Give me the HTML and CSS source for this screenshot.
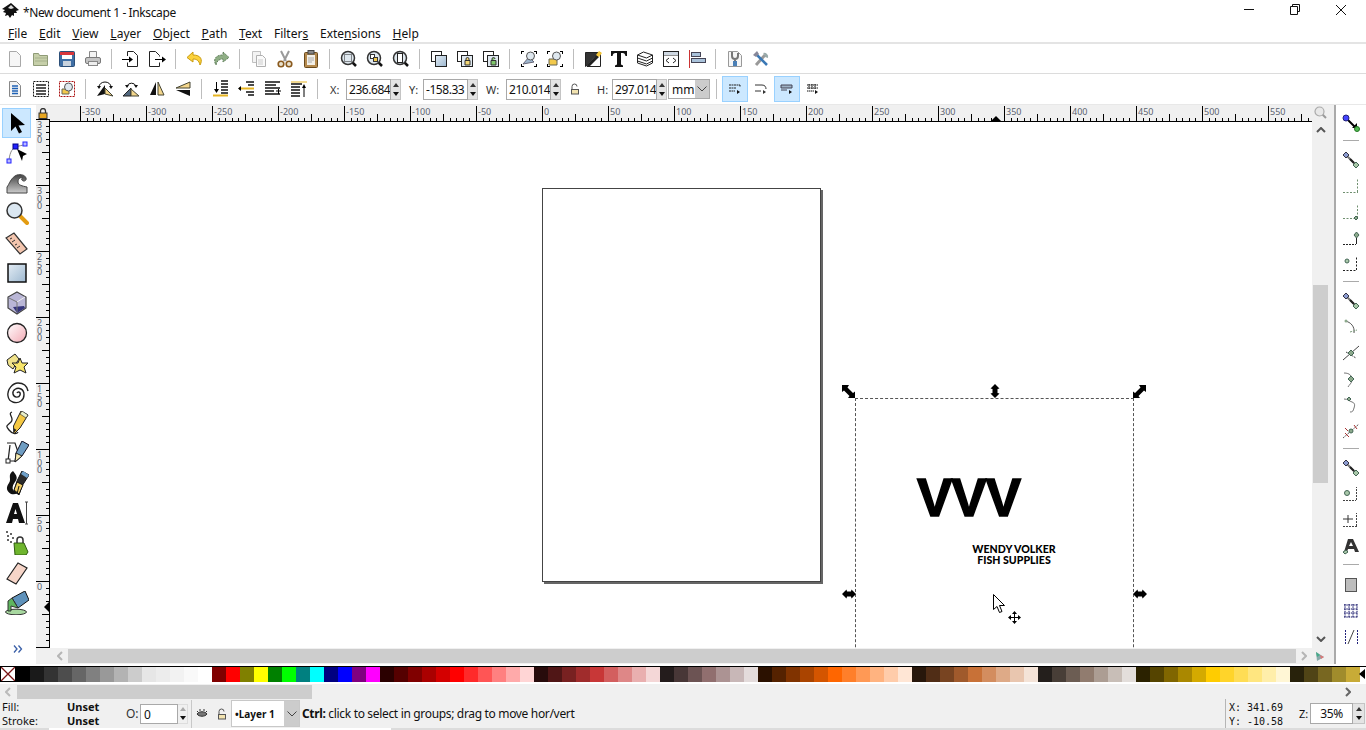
FILE: index.html
```html
<!DOCTYPE html>
<html lang="en">
<head>
    <meta charset="UTF-8">
    <title>*New document 1 - Inkscape</title>
    <link rel="stylesheet" href="styles.css">
</head>
<body>

<!-- shared snap icon pieces + gradients -->
<svg class="defs" aria-hidden="true">
    <defs>
        <linearGradient id="glass" x1="0" y1="0" x2="1" y2="1"><stop offset="0" stop-color="#e4edf5"/><stop offset="1" stop-color="#9db8d0"/></linearGradient>
        <linearGradient id="pink" x1="0" y1="0" x2="1" y2="1"><stop offset="0" stop-color="#fff"/><stop offset="1" stop-color="#f3a9b4"/></linearGradient>
        <linearGradient id="wave" x1="0" y1="0" x2="0" y2="1"><stop offset="0" stop-color="#444"/><stop offset="1" stop-color="#ccc"/></linearGradient>
        <symbol id="s-nodes" viewBox="0 0 18 18"><path d="M4 4l10 10" stroke="#777" stroke-width="2"/><path d="M8 8l4 4" stroke="#222" stroke-width="2"/><path d="M4 1l3 3-3 3-3-3z" fill="#8b9bd0" stroke="#334"/><path d="M14 11l3 3-3 3-3-3z" fill="#a9c8a9" stroke="#465"/></symbol>
        <symbol id="s-corner" viewBox="0 0 18 18"><path d="M1 15.500h15M15.500 15V1" stroke="#6f8f6f" stroke-dasharray="2 1.500" fill="none"/></symbol>
    </defs>
</svg>

<div class="titlebar">
    <svg class="app-icon" width="18" height="16" viewBox="0 0 18 16"><path d="M9 0l8 7-3 1 1 2-3 0 0 3-2-1-2 3-2-3-3 1 1-3-3-1 2-2-3-1z" fill="#111"/><path d="M9 2l3 3-3 1-3-1z" fill="#ddd"/></svg>
    <span class="title-text">*New document 1 - Inkscape</span>
    <div class="win-controls">
        <svg width="12" height="12" viewBox="0 0 12 12"><path d="M1 5.500h10" stroke="#111"/></svg>
        <svg width="12" height="12" viewBox="0 0 12 12"><path d="M3.500 2.500v-2h7v7h-2M1.500 2.500h7v8h-7z" stroke="#111" fill="none"/></svg>
        <svg width="12" height="12" viewBox="0 0 12 12"><path d="M1 1l10 10M11 1l-10 10" stroke="#111"/></svg>
    </div>
</div>

<div class="menubar">
    <span><u>F</u>ile</span><span><u>E</u>dit</span><span><u>V</u>iew</span><span><u>L</u>ayer</span><span><u>O</u>bject</span><span><u>P</u>ath</span><span><u>T</u>ext</span><span>Filter<u>s</u></span><span>Exte<u>n</u>sions</span><span><u>H</u>elp</span>
</div>

<div class="toolbar tb-commands">
    <i class="btn"><svg viewBox="0 0 18 18"><path d="M3.500 1.500h7l4 4v11h-11z" fill="#f6f6f6" stroke="#a8a8a8"/></svg></i>
    <i class="btn"><svg viewBox="0 0 18 18"><path d="M1.500 15.500v-12h5l1 2h8v10z" fill="#c6cfa9" stroke="#8f9b77"/><path d="M3 8h12M3 11h12" stroke="#a6b18c"/></svg></i>
    <i class="btn"><svg viewBox="0 0 18 18"><rect x="1.500" y="1.500" width="15" height="15" rx="1" fill="#3f6fa5" stroke="#2c4f78"/><rect x="2" y="2" width="14" height="3" fill="#d8363c"/><rect x="4" y="5" width="10" height="4" fill="#fff"/><rect x="5" y="11" width="8" height="5" fill="#c9d3de"/></svg></i>
    <i class="btn"><svg viewBox="0 0 18 18"><path d="M5.500 7.500v-6h7v6" fill="#f4f4f4" stroke="#888"/><rect x="1.500" y="7.500" width="15" height="6" rx="1.500" fill="#c4c4c4" stroke="#7a7a7a"/><rect x="4.500" y="11.500" width="9" height="4" fill="#eee" stroke="#888"/></svg></i>
    <b class="sep"></b>
    <i class="btn"><svg viewBox="0 0 18 18"><path d="M5.500 6v-4.500h6l4 4v11h-10v-4" fill="#fff" stroke="#222"/><path d="M0 9.500h8" stroke="#000"/><path d="M7 6.500l4 3-4 3z" fill="#000"/></svg></i>
    <i class="btn"><svg viewBox="0 0 18 18"><path d="M11.500 6.500v-1l-4-4h-6v15h10v-4" fill="#fff" stroke="#222"/><path d="M7 9.500h8" stroke="#000"/><path d="M14 6.500l4 3-4 3z" fill="#000"/></svg></i>
    <b class="sep"></b>
    <i class="btn"><svg viewBox="0 0 18 18"><path d="M7 2L1 7.500 7 12V9c3 0 6 1 7 6 3-5 1-10-7-10z" fill="#fcd23c" stroke="#c99b10"/></svg></i>
    <i class="btn"><svg viewBox="0 0 18 18"><path d="M11 2l6 5.500L11 12V9c-3 0-6 1-7 6-3-5-1-10 7-10z" fill="#8fae85" stroke="#5f7f5a" stroke-dasharray="2 1"/></svg></i>
    <b class="sep"></b>
    <i class="btn"><svg viewBox="0 0 18 18"><path d="M2.500 1.500h8v11h-8z" fill="#f3f3f3" stroke="#c0c0c0"/><path d="M6.500 5.500h6l3 3v8h-9z" fill="#fafafa" stroke="#b0b0b0"/><path d="M8 10h5M8 12h5M8 14h5" stroke="#ccc"/></svg></i>
    <i class="btn"><svg viewBox="0 0 18 18"><path d="M5 1l5 10M13 1L8 11" stroke="#9a9a9a" stroke-width="2"/><circle cx="5" cy="14" r="2.800" fill="#e9e2cf" stroke="#8a5a1e" stroke-width="1.600"/><circle cx="13" cy="14" r="2.800" fill="#e9e2cf" stroke="#8a5a1e" stroke-width="1.600"/></svg></i>
    <i class="btn"><svg viewBox="0 0 18 18"><rect x="2.500" y="2.500" width="13" height="15" rx="1" fill="#b58a4e" stroke="#6a4a1c"/><path d="M5 5h8v10H5z" fill="#f3f0e8"/><path d="M6 8h6M6 10h6M6 12h4" stroke="#aaa"/><rect x="6" y="0.500" width="6" height="3.500" fill="#888" stroke="#444"/></svg></i>
    <b class="sep"></b>
    <i class="btn"><svg viewBox="0 0 18 18"><path d="M12 12l4 4" stroke="#111" stroke-width="2.500"/><circle cx="8" cy="8" r="6.500" fill="#dfe8ef" stroke="#333" stroke-width="1.500"/><rect x="4.500" y="4.500" width="7" height="7" fill="none" stroke="#222" stroke-dasharray="1 1"/></svg></i>
    <i class="btn"><svg viewBox="0 0 18 18"><path d="M12 12l4 4" stroke="#111" stroke-width="2.500"/><circle cx="8" cy="8" r="6.500" fill="#dfe8ef" stroke="#333" stroke-width="1.500"/><rect x="4.500" y="4.500" width="4" height="4" fill="#fff" stroke="#333"/><rect x="7.500" y="7.500" width="4" height="4" fill="#f2c94c" stroke="#333"/></svg></i>
    <i class="btn"><svg viewBox="0 0 18 18"><path d="M12 12l4 4" stroke="#111" stroke-width="2.500"/><circle cx="8" cy="8" r="6.500" fill="#dfe8ef" stroke="#333" stroke-width="1.500"/><rect x="5.500" y="3.500" width="5" height="9" fill="#fff" stroke="#222"/></svg></i>
    <b class="sep"></b>
    <i class="btn"><svg viewBox="0 0 18 18"><rect x="1.500" y="1.500" width="10" height="10" fill="#fff" stroke="#222"/><rect x="5.500" y="5.500" width="11" height="11" fill="url(#glass)" stroke="#222"/></svg></i>
    <i class="btn"><svg viewBox="0 0 18 18"><rect x="1.500" y="1.500" width="10" height="10" fill="#fff" stroke="#222"/><rect x="5.500" y="5.500" width="11" height="11" fill="#dfe8ef" stroke="#222"/><path d="M9 10.500h5v4.500H9zM10 10.500V9a1.500 1.500 0 013 0v1.500" fill="#f2d675" stroke="#333"/></svg></i>
    <i class="btn"><svg viewBox="0 0 18 18"><rect x="1.500" y="1.500" width="10" height="10" fill="#fff" stroke="#222"/><rect x="5.500" y="5.500" width="11" height="11" fill="#dfe8ef" stroke="#222"/><path d="M9 10.500h5v4.500H9zM10 10.500V9a1.500 1.500 0 013 0" fill="#7fc66b" stroke="#333"/></svg></i>
    <b class="sep"></b>
    <i class="btn"><svg viewBox="0 0 18 18"><path d="M1 1h3v1H2v2H1zM14 1h3v3h-1V2h-2zM1 14h1v2h2v1H1zM14 16h2v-2h1v3h-3z" fill="#000"/><path d="M3 14L9 7l5 5z" fill="#9fb7cf" stroke="#667"/><circle cx="10.500" cy="6" r="4" fill="#dfe8ef" stroke="#555"/></svg></i>
    <i class="btn"><svg viewBox="0 0 18 18"><path d="M1 1h3v1H2v2H1zM14 1h3v3h-1V2h-2zM1 14h1v2h2v1H1zM14 16h2v-2h1v3h-3z" fill="#000"/><path d="M3 9h8v6H3z" fill="#f2c94c" stroke="#665"/><circle cx="10.500" cy="6" r="4" fill="#dfe8ef" stroke="#555"/></svg></i>
    <b class="sep"></b>
    <i class="btn"><svg viewBox="0 0 18 18"><path d="M1.500 16.500V2.500h13L1.500 16.500z" fill="#333" stroke="#222"/><path d="M15 2.500L3 16.500h13.500V2.500z" fill="#fff" stroke="#222"/><path d="M4 14l9-9 2 2-9 9-3 0z" fill="#222"/><path d="M12 5l3-4 3 2-3 4z" fill="#f8c83a"/></svg></i>
    <i class="btn"><svg viewBox="0 0 18 18"><path d="M1 1h16v5h-1.500c-.5-2-1-3-3-3H11v11.500l2 1V17H5v-1.500l2-1V3H5.500c-2 0-2.500 1-3 3H1z" fill="#111"/></svg></i>
    <i class="btn"><svg viewBox="0 0 18 18"><path d="M1.500 5l6-3 9 3-6 3z" fill="#fff" stroke="#222"/><path d="M1.500 8l9 3 6-3M1.500 11l9 3 6-3" fill="none" stroke="#222"/><path d="M1.500 5v8l9 3 6-3V5" fill="none" stroke="#222"/></svg></i>
    <i class="btn"><svg viewBox="0 0 18 18"><rect x="1.500" y="1.500" width="15" height="15" fill="#fff" stroke="#222"/><path d="M2 5h14" stroke="#222"/><path d="M2 2h14v3H2z" fill="#cfd8e2"/><path d="M7 8l-3 2.500L7 13M11 8l3 2.500L11 13" fill="none" stroke="#222"/></svg></i>
    <i class="btn"><svg viewBox="0 0 18 18"><path d="M1.500 0v18" stroke="#c33"/><rect x="3.500" y="2.500" width="9" height="4" fill="#a9c2da" stroke="#445"/><rect x="3.500" y="8.500" width="14" height="4" fill="#a9c2da" stroke="#445"/></svg></i>
    <b class="sep"></b>
    <i class="btn"><svg viewBox="0 0 18 18"><path d="M2.500 1.500h9l4 4v11h-13z" fill="#f6f6f6" stroke="#999"/><path d="M6 2v4a3 3 0 006 0V3M9 9v7" fill="none" stroke="#777" stroke-width="2"/><path d="M7 11h4v5H7z" fill="#4a7fb5"/></svg></i>
    <i class="btn"><svg viewBox="0 0 18 18"><path d="M4 15L13 5" stroke="#999" stroke-width="3"/><path d="M11 3a4 4 0 015 5l-3-1-1-3z" fill="#9aa"/><path d="M4 4l11 11" stroke="#3a78b5" stroke-width="2.500"/><path d="M1 5l4-4 2 3-3 3z" fill="#889"/></svg></i>
</div>

<div class="toolbar tb-controls">
    <i class="btn"><svg viewBox="0 0 18 18"><path d="M3.500 1.500h7l4 4v11h-11z" fill="#f4f4f4" stroke="#888"/><path d="M6 6h6M6 8.500h6M6 11h6M6 13.500h6" stroke="#1f62b5" stroke-width="1.300"/></svg></i>
    <i class="btn"><svg viewBox="0 0 18 18"><rect x="1.500" y="1.500" width="15" height="15" fill="#fff" stroke="#111" stroke-dasharray="2 1"/><path d="M4 5h10M4 8h10M4 11h10M4 14h10" stroke="#555" stroke-width="2"/></svg></i>
    <i class="btn"><svg viewBox="0 0 18 18"><rect x="1.500" y="1.500" width="15" height="15" fill="#fff" stroke="#a11" stroke-dasharray="2 1"/><path d="M4 9h7v5H4z" fill="#f2c94c" stroke="#665"/><circle cx="10.500" cy="7" r="4" fill="#dfe8ef" stroke="#555"/></svg></i>
    <b class="sep"></b>
    <i class="btn"><svg viewBox="0 0 18 18"><path d="M1 16l8-2V5z" fill="#111"/><path d="M9 14l8 2-8-8z" fill="#f3d68c" stroke="#443"/><path d="M3 7a6 5 0 0112 0" fill="none" stroke="#111"/><path d="M1 6h4L3 9zM13 6h4l-2 3z" fill="#111"/></svg></i>
    <i class="btn"><svg viewBox="0 0 18 18"><path d="M1 16h8V8z" fill="#53697f" stroke="#222"/><path d="M9 16h8l-8-7z" fill="#f3d68c" stroke="#443"/><path d="M5 6a5 5 0 019 0" fill="none" stroke="#111"/><path d="M3 5h4L5 8zM12 5h4l-2 3z" fill="#111"/></svg></i>
    <i class="btn"><svg viewBox="0 0 18 18"><path d="M2 15L8 2v13z" fill="#111"/><path d="M10 15V2l6 13z" fill="#f3d68c" stroke="#443"/></svg></i>
    <i class="btn"><svg viewBox="0 0 18 18"><path d="M16 2L2 8h14z" fill="#f3d68c" stroke="#443"/><path d="M16 16L2 10h14z" fill="#111"/></svg></i>
    <b class="sep"></b>
    <i class="btn"><svg viewBox="0 0 18 18"><path d="M9 1h7M9 4h7M9 7h7M9 10h7M9 13h7" stroke="#111" stroke-width="1.500"/><path d="M4.500 2v9" stroke="#000"/><path d="M2 9h5l-2.500 4z" fill="#000"/><path d="M1 15.500h15" stroke="#e6b422" stroke-width="2"/></svg></i>
    <i class="btn"><svg viewBox="0 0 18 18"><path d="M8 2h8M10 5h6M8 12h8M10 15h6" stroke="#111" stroke-width="1.500"/><path d="M1 8.500h15" stroke="#e6b422" stroke-width="2"/><path d="M3 6l-3 2.500 3 2.500zM7 5h-3" fill="#000"/></svg></i>
    <i class="btn"><svg viewBox="0 0 18 18"><path d="M1 2h15M1 5h11M1 8h15M1 11h9M1 14h15" stroke="#111" stroke-width="1.500"/><path d="M12 11h5M14.500 9v5" stroke="#000"/></svg></i>
    <i class="btn"><svg viewBox="0 0 18 18"><path d="M1 2h16" stroke="#e6b422" stroke-width="1"/><path d="M1 4h11M1 7h9M1 10h9M1 13h9M1 16h9" stroke="#111" stroke-width="1.500"/><path d="M14 6v11" stroke="#000"/><path d="M12 8l2-4 2 4z" fill="#000"/></svg></i>
    <b class="sep"></b>
    <label class="field fx">X:</label><span class="spin sx"><span class="spin-val">236.684</span><span class="spin-btns"><em class="up"></em><em class="down"></em></span></span>
    <label class="field fy">Y:</label><span class="spin sy"><span class="spin-val">-158.33</span><span class="spin-btns"><em class="up"></em><em class="down"></em></span></span>
    <label class="field fw">W:</label><span class="spin"><span class="spin-val">210.014</span><span class="spin-btns"><em class="up"></em><em class="down"></em></span></span>
    <svg class="small-lock" width="10" height="12" viewBox="0 0 10 12"><path d="M2 6V3.500a2.500 2.500 0 015 0" fill="none" stroke="#555"/><rect x="1.500" y="6.500" width="7" height="4.500" fill="#f2e3b0" stroke="#555"/></svg>
    <label class="field fh">H:</label><span class="spin"><span class="spin-val">297.014</span><span class="spin-btns"><em class="up"></em><em class="down"></em></span></span>
    <span class="unit"><span>mm</span><em class="combo-arrow"><svg width="10" height="6" viewBox="0 0 10 6"><path d="M.5.500l4.500 4.500 4.500-4.500" fill="none" stroke="#444"/></svg></em></span>
    <b class="sep sep-units"></b>
    <i class="btn toggle on"><svg viewBox="0 0 14 12"><path d="M1 2h11v2M1 5h7M1 8h6" stroke="#222" fill="none" stroke-dasharray="2 .500"/><path d="M9 7l3 2-3 2z" fill="#111"/></svg></i>
    <i class="btn toggle"><svg viewBox="0 0 14 12"><path d="M1 2h7c3 0 4 2 4 4M1 8h6" stroke="#333" fill="none"/><path d="M9 7l3 2-3 2z" fill="#333"/></svg></i>
    <i class="btn toggle on"><svg viewBox="0 0 14 12"><path d="M1 2h11v3H1zM1 7h6" stroke="#445" fill="#9db2c6"/><path d="M9 7l3 2-3 2z" fill="#111"/></svg></i>
    <i class="btn toggle"><svg viewBox="0 0 14 12"><path d="M1 2h11M1 5h11M3 1v5M6 1v5M9 1v5M1 8h7" stroke="#111" fill="none" stroke-dasharray="1.500 .500"/><path d="M9 7l3 2-3 2z" fill="#111"/></svg></i>
</div>

<div class="main">
    <div class="toolbox">
        <i class="tool active"><svg viewBox="0 0 24 24"><path d="M6 2l0 18 4.500-4.500 3.500 7 3-1.500-3.500-6.500 6.500-.5z" fill="#000"/></svg></i>
        <i class="tool"><svg viewBox="0 0 24 24"><path d="M4 19C5 10 8 7 11 6c3-1 6-2 9-2" fill="none" stroke="#888"/><rect x="8" y="3" width="5" height="5" fill="#22f" stroke="#008"/><rect x="18" y="1" width="4" height="4" fill="#bbf" stroke="#22f"/><rect x="2" y="18" width="4" height="4" fill="#bbf" stroke="#22f"/><path d="M12 8l10 5-4 2-1 5z" fill="#000"/></svg></i>
        <i class="tool"><svg viewBox="0 0 24 24"><path d="M2 22V16C4 14 6 6 12 4c4-1 8 0 9 3 1 3-3 4-4 2-1-1 0-2 1-2-2-1-5 0-5 4 0 3 4 4 9 5v6z" fill="url(#wave)" stroke="#444"/></svg></i>
        <i class="tool"><svg viewBox="0 0 24 24"><path d="M15 15l7 7" stroke="#e39c12" stroke-width="4" stroke-linecap="round"/><circle cx="9.500" cy="9.500" r="7.500" fill="#dbe7f1" stroke="#333" stroke-width="1.500"/></svg></i>
        <i class="tool"><svg viewBox="0 0 24 24"><path d="M1 7l8-5 13 16-7 5z" fill="#f3c5ae" stroke="#333" stroke-width="1.200"/><path d="M5 8l2-1M7 11l3-2M10 14l2-1M12 17l3-2" stroke="#333"/></svg></i>
        <i class="tool"><svg viewBox="0 0 24 24"><rect x="3" y="3" width="18" height="18" fill="url(#glass)" stroke="#111" stroke-width="1.500"/></svg></i>
        <i class="tool"><svg viewBox="0 0 24 24"><path d="M12 1l9 5v11l-9 6-9-6V6z" fill="#b9b6d6" stroke="#444" stroke-width="1.200"/><path d="M8 16l11-1 1 2-8 5z" fill="#34347a"/><path d="M12 11l8-5" stroke="#eee"/><path d="M4 7l8 4v10" fill="none" stroke="#777"/></svg></i>
        <i class="tool"><svg viewBox="0 0 24 24"><circle cx="12" cy="12" r="9.500" fill="url(#pink)" stroke="#222" stroke-width="1.300"/></svg></i>
        <i class="tool"><svg viewBox="0 0 24 24"><path d="M2 9l8-6 4 5-2 3-4 7-5-4z" fill="#f0e28a" stroke="#222"/><path d="M15 7l2 5 6 0-4 4 2 6-6-3-6 3 2-6-4-4 6 0z" fill="#f7e56b" stroke="#222"/></svg></i>
        <i class="tool"><svg viewBox="0 0 24 24"><path d="M12 12c1-2 4-1 3 2s-6 3-7-1 4-7 8-5 4 9 0 12-12 2-13-5S8 2 13 2s9 3 10 8" fill="none" stroke="#222" stroke-width="1.400"/></svg></i>
        <i class="tool"><svg viewBox="0 0 24 24"><path d="M7 1C2 3 10 7 6 11S0 14 4 19s8 4 9 2" fill="none" stroke="#222" stroke-width="1.300"/><path d="M16 0l7 4-8 13-6 6-.5-8z" fill="#f5c842" stroke="#222"/><path d="M17 0l6 4-2 3-6-4z" fill="#e9efc9" stroke="#222" stroke-width=".6"/><path d="M8.500 17l3 2-3 3z" fill="#222"/></svg></i>
        <i class="tool"><svg viewBox="0 0 24 24"><path d="M2 2h8l3 9" fill="none" stroke="#222" stroke-width="1.200"/><path d="M3 20L5 4" fill="none" stroke="#222" stroke-width="1.200"/><rect x="1" y="18" width="4" height="4" fill="#fff" stroke="#222"/><path d="M5 20h5" stroke="#222"/><path d="M17 0l7 4-7 11-7 6 1-9z" fill="#6f9dc2" stroke="#112"/><path d="M11 12l6 3-7 6z" fill="#f4e9b0" stroke="#222"/></svg></i>
        <i class="tool"><svg viewBox="0 0 24 24"><path d="M8 0C2 4 7 8 4 12s-3 8 2 11c5 1 7-1 6-2C6 20 7 15 10 11S12 5 8 0z" fill="#111"/><path d="M17 0l7 4-7 11-3 9-5-4 3-10z" fill="#2b2b2b" stroke="#111"/><path d="M18 0l6 4-2 3-6-4z" fill="#6fa0c9"/><path d="M12 11l6 3-4 9-5-4z" fill="#f2cf67" stroke="#111"/><path d="M12 23l2-8" stroke="#111"/></svg></i>
        <i class="tool"><svg viewBox="0 0 24 24"><path d="M8 2h5l7 20h-6l-1-4H8l-1 4H1zM9 13h3l-1.500-5z" fill="#111"/><path d="M20 1h3M21.500 1v22M20 23h3" stroke="#444" fill="none"/></svg></i>
        <i class="tool"><svg viewBox="0 0 24 24"><path d="M9 12h10l4 9-2 3H10z" fill="#6fb52e" stroke="#2f5c10"/><path d="M12 12V9a3 3 0 016 0v3" fill="none" stroke="#333" stroke-width="1.500"/><path d="M2 5h2M5 3h2M7 7h2M2 9h2M5 11h2M1 1h2" stroke="#333" stroke-width="1.500"/></svg></i>
        <i class="tool"><svg viewBox="0 0 24 24"><path d="M2 18L13 2l9 5-11 16z" fill="#f6d5c8" stroke="#222" stroke-width="1.200"/></svg></i>
        <i class="tool"><svg viewBox="0 0 24 24"><ellipse cx="11" cy="21" rx="10.500" ry="2.800" fill="#a8d8a0" stroke="#333"/><path d="M7 7l13-7 4 9-11 8z" fill="#5f92bb" stroke="#111"/><path d="M7 7l-4 3v10h3v-5l7 2z" fill="#5fb55f" stroke="#333"/></svg></i>
        <svg class="tool-more" width="10" height="8" viewBox="0 0 10 8"><path d="M1 .500l3 3.500-3 3.500M5.500 .500l3 3.500-3 3.500" fill="none" stroke="#3a5fa8" stroke-width="1.300"/></svg>
    </div>

    <div class="workspace">
        <div class="ruler-lock"><svg width="10" height="11" viewBox="0 0 10 11"><path d="M2.500 5V3a2.500 2.500 0 015 0v2" fill="none" stroke="#333" stroke-width="1.300"/><rect x="1" y="5" width="8" height="5.500" fill="#e6a520" stroke="#333"/></svg></div>
        <div class="ruler-h">
            <span>-350</span><span>-300</span><span>-250</span><span>-200</span><span>-150</span><span>-100</span><span>-50</span><span>0</span><span>50</span><span>100</span><span>150</span><span>200</span><span>250</span><span>300</span><span>350</span><span>400</span><span>450</span><span>500</span><span>550</span>
            <em class="ruler-mark-h"></em>
        </div>
        <div class="corner-zoom"><svg width="13" height="13" viewBox="0 0 13 13"><path d="M8 8l4 4" stroke="#999" stroke-width="2"/><circle cx="5.500" cy="5.500" r="4.500" fill="#e8e8e8" stroke="#aaa" stroke-width="1.200"/></svg></div>

        <div class="ruler-v">
            <span>350</span><span>300</span><span>250</span><span>200</span><span>150</span><span>100</span><span>50</span><span>0</span>
            <em class="ruler-mark-v"></em>
        </div>

        <div class="canvas">
            <div class="page"></div>
            <div class="selection"></div>
            <div class="logo-mark">VVV</div>
            <div class="logo-name">WENDY VOLKER<br>FISH SUPPLIES</div>

            <svg class="handle h-nw" width="13" height="13" viewBox="0 0 13 13"><path d="M0 0h7L5.500 2.500 11 8l2-1.500V13H6l1.500-2L2 5.500 0 7z" fill="#000"/></svg>
            <svg class="handle h-n" width="10" height="14" viewBox="0 0 10 14"><path d="M5 0l4.500 4.500L7.500 5v4l2 .5L5 14 .5 9.500l2-.5V5L.5 4.500z" fill="#000"/></svg>
            <svg class="handle h-ne" width="13" height="13" viewBox="0 0 13 13"><path d="M13 0H6l1.500 2.500L2 8 0 6.500V13h7l-1.500-2L11 5.500 13 7z" fill="#000"/></svg>
            <svg class="handle h-w" width="14" height="10" viewBox="0 0 14 10"><path d="M0 5L4.500.500 5 2.500h4l.5-2L14 5 9.500 9.500 9 7.500H5l-.5 2z" fill="#000"/></svg>
            <svg class="handle h-e" width="14" height="10" viewBox="0 0 14 10"><path d="M0 5L4.500.500 5 2.500h4l.5-2L14 5 9.500 9.500 9 7.500H5l-.5 2z" fill="#000"/></svg>

            <svg class="pointer" width="13" height="20" viewBox="0 0 13 20"><path d="M.5.500v15l3.500-3 2.500 6 2.500-1-2.500-6h5z" fill="#fff" stroke="#000"/></svg>
            <svg class="move-cur" width="13" height="13" viewBox="0 0 13 13"><path d="M6.500 0l2.500 3H7v3h3V4l3 2.500L10 9V7H7v3h2l-2.500 3L4 10h2V7H3v2L0 6.500 3 4v2h3V3H4z" fill="#000"/></svg>
        </div>

        <div class="scroll-v">
            <svg class="arrow-up" width="10" height="6" viewBox="0 0 10 6"><path d="M1 5l4-4 4 4" fill="none" stroke="#555" stroke-width="2"/></svg>
            <div class="thumb-v"></div>
            <svg class="arrow-down" width="10" height="6" viewBox="0 0 10 6"><path d="M1 1l4 4 4-4" fill="none" stroke="#555" stroke-width="2"/></svg>
        </div>

        <div class="scroll-h">
            <svg width="6" height="10" viewBox="0 0 6 10"><path d="M5 1L1 5l4 4" fill="none" stroke="#b5b5b5" stroke-width="2"/></svg>
            <div class="thumb-h"></div>
            <svg width="6" height="10" viewBox="0 0 6 10"><path d="M1 1l4 4-4 4" fill="none" stroke="#b5b5b5" stroke-width="2"/></svg>
        </div>
        <div class="corner-color"><svg width="10" height="11" viewBox="0 0 10 11"><path d="M1 1l8 5-7 4z" fill="#8aa"/><path d="M1 1l4 3-3 2z" fill="#4a8"/><path d="M5 4l4 2-3 2z" fill="#d77"/></svg></div>
    </div>

    <div class="snapbar">
        <i class="snap"><svg viewBox="0 0 18 18"><path d="M4 4l9 9" stroke="#000" stroke-width="2"/><path d="M10 14l5 0 0-5z" fill="#000"/><circle cx="4" cy="4" r="3" fill="#44f" stroke="#227"/><circle cx="15" cy="15" r="2.500" fill="#5b5" stroke="#272"/></svg></i>
        <b class="snap-sep"></b>
        <i class="snap s0"><svg><use href="#s-nodes"/></svg></i>
        <i class="snap s1"><svg><use href="#s-corner"/></svg></i>
        <i class="snap s2"><svg><use href="#s-corner"/><path d="M16 15l-2-2-2 2 2 2z" fill="#8ca98c" stroke="#465"/></svg></i>
        <i class="snap s3"><svg><path d="M1 15.500h13" stroke="#222" stroke-dasharray="2 1"/><path d="M14.500 15V9" stroke="#222"/><path d="M14.500 3l-2.500 3 2.500 3 2.500-3z" fill="#8ca98c" stroke="#465"/></svg></i>
        <i class="snap s4"><svg><path d="M1 15.500h13M14.500 15V2" stroke="#222" stroke-dasharray="2 1.500"/><circle cx="5" cy="6" r="2" fill="#a9c8a9" stroke="#465"/></svg></i>
        <b class="snap-sep"></b>
        <i class="snap s5"><svg><use href="#s-nodes"/></svg></i>
        <i class="snap s6"><svg><path d="M3 3c6 1 10 6 9 12" fill="none" stroke="#555"/><path d="M8 14l7-2" stroke="#7a9a7a" stroke-dasharray="2 1"/><circle cx="4" cy="3" r="1.500" fill="#8ca98c"/></svg></i>
        <i class="snap s7"><svg><path d="M1 16L17 2" stroke="#444"/><path d="M4 8l10 6" stroke="#444" stroke-dasharray="2 1"/><path d="M9 6l-3 3 3 3 3-3z" fill="#8ca98c" stroke="#465"/></svg></i>
        <i class="snap s8"><svg><path d="M2 3c6 0 8 3 8 7 0 3-3 5-4 7" fill="none" stroke="#777"/><path d="M9 6l-3 3 3 3 3-3z" fill="#8ca98c" stroke="#465"/></svg></i>
        <i class="snap s9"><svg><path d="M2 3c4 0 5 2 8 3s3 3 2 6-1 4-4 4" fill="none" stroke="#777"/><path d="M7 1l-2 2 2 2 2-2z" fill="#8ca98c" stroke="#465"/></svg></i>
        <i class="snap s10"><svg><path d="M1 16L17 2" stroke="#555" stroke-dasharray="2 1"/><path d="M3 6l3 3M12 3l3 4M3 11l4 4" stroke="#a33"/><circle cx="9" cy="9" r="2" fill="#8ca98c" stroke="#465"/></svg></i>
        <b class="snap-sep"></b>
        <i class="snap s11"><svg><use href="#s-nodes"/></svg></i>
        <i class="snap s12"><svg><path d="M1 15.500h13M14.500 15V2" stroke="#444" stroke-dasharray="2 1"/><circle cx="5" cy="8" r="2.500" fill="#a9c8a9" stroke="#465"/></svg></i>
        <i class="snap s13"><svg><path d="M1 15.500h14M14.500 15V2" stroke="#444" stroke-dasharray="2 1"/><path d="M1 8h10M6 4v8" stroke="#333"/></svg></i>
        <i class="snap s14"><svg><path d="M6 2h5l6 13h-4l-1-3H6l-1 3H2zM7 9h4L9 5z" fill="#333"/><path d="M1 15l3-2 2 2-3 2z" fill="#a9c8a9" stroke="#465"/></svg></i>
        <b class="snap-sep"></b>
        <i class="snap s15"><svg><rect x="3.500" y="2.500" width="11" height="13" fill="#bdbdbd" stroke="#555"/></svg></i>
        <i class="snap s16"><svg><path d="M2 3h14M2 7h14M2 11h14M2 15h14M3 2v14M7 2v14M11 2v14M15 2v14" stroke="#111166" stroke-dasharray="1.500 .800" fill="none"/></svg></i>
        <i class="snap s17"><svg><path d="M3.500 2v14M15.500 2v14" stroke="#22227a" stroke-dasharray="2 1"/><path d="M6 16L12 2" stroke="#444"/></svg></i>
    </div>
</div>

<div class="palette">
    <span class="no-paint"><svg width="14" height="14" viewBox="0 0 14 14"><path d="M0 0l14 14M14 0L0 14" stroke="#7a1515" stroke-width="1.300"/></svg></span>
    <div id="swatches"></div>
    <em class="palette-menu"></em>
</div>

<div class="palette-scroll">
    <svg class="ps-left" width="6" height="10" viewBox="0 0 6 10"><path d="M5 1L1 5l4 4" fill="none" stroke="#bbb" stroke-width="2"/></svg>
    <div class="ps-thumb"></div>
    <svg class="ps-right" width="6" height="10" viewBox="0 0 6 10"><path d="M1 1l4 4-4 4" fill="none" stroke="#666" stroke-width="2"/></svg>
</div>

<div class="statusbar">
    <div class="fs-labels"><span>Fill:</span><span>Stroke:</span></div>
    <div class="fs-values"><span>Unset</span><span>Unset</span></div>
    <label class="opacity-label">O:</label>
    <span class="spin opacity-spin"><span class="spin-val">0</span><span class="spin-btns"><em class="up faint"></em><em class="down"></em></span></span>
    <b class="status-sep"></b>
    <svg class="eye" width="12" height="10" viewBox="0 0 12 10"><path d="M1 5c2-3 8-3 10 0-2 3-8 3-10 0z" fill="#777" stroke="#333"/><path d="M1 2l1 1M4 0v2M8 0v2M11 2l-1 1" stroke="#333"/></svg>
    <svg class="status-lock" width="10" height="12" viewBox="0 0 10 12"><path d="M2 6V3.500a2.500 2.500 0 015 0" fill="none" stroke="#555"/><rect x="1.500" y="6.500" width="7" height="4.500" fill="#f2e3b0" stroke="#555"/></svg>
    <span class="layer-combo"><span class="layer-name">•Layer 1</span><em class="combo-arrow"><svg width="10" height="6" viewBox="0 0 10 6"><path d="M.5.500l4.500 4.500 4.500-4.500" fill="none" stroke="#444"/></svg></em></span>
    <span class="message"><strong>Ctrl:</strong> click to select in groups; drag to move hor/vert</span>
    <div class="coords">
        <div class="coord-grid"><span>X:</span><span>341.69</span><span>Y:</span><span>-10.58</span></div>
        <label class="zoom-label">Z:</label>
        <span class="spin zoom-spin"><span class="spin-val">35%</span><span class="spin-btns"><em class="up"></em><em class="down"></em></span></span>
    </div>
</div>
<div class="bottom-strip"><span></span></div>

<script src="app.js"></script>
</body>
</html>
```

FILE: styles.css
```css
* {
    margin: 0;
    padding: 0;
    box-sizing: border-box;
}

body {
    width: 1366px;
    height: 730px;
    overflow: hidden;
    background: #fff;
    color: #111;
    font-family: "Noto Sans", "Open Sans", sans-serif;
    font-size: 12px;
    display: flex;
    flex-direction: column;
}

i, em, b { font-style: normal; font-weight: normal; }

.defs {
    width: 0;
    height: 0;
    display: block;
    flex: none;
}

/* Title bar */
.titlebar {
    height: 22px;
    flex: none;
    display: flex;
    align-items: center;
    padding-left: 2px;
}

.app-icon { margin-right: 3px; }

.title-text {
    font-size: 12px;
    letter-spacing: -0.38px;
    padding-top: 2px;
}

.win-controls {
    margin-left: auto;
    display: flex;
    gap: 34px;
    padding-right: 19px;
    margin-top: -3px;
}

/* Menu */
.menubar {
    height: 22px;
    flex: none;
    display: flex;
    align-items: center;
    gap: 11.8px;
    padding: 2px 0 0 8px;
    border-bottom: 2px solid #e4e4e4;
}

/* Toolbars */
.toolbar {
    flex: none;
    display: flex;
    align-items: center;
    padding-left: 2px;
    border-bottom: 1px solid #dcdcdc;
}

.tb-commands { height: 30px; }
.tb-controls { height: 31px; border-bottom: 1px solid #e8e8e8; }

.btn {
    width: 26px;
    height: 26px;
    flex: none;
    display: flex;
    align-items: center;
    justify-content: center;
}

.btn svg {
    width: 18px;
    height: 18px;
}

.sep {
    width: 1px;
    height: 20px;
    margin: 0 6px 0 5px;
    background: #bdbdbd;
    flex: none;
}

.field { font-size: 11px; color: #333; flex: none; }
.fx { margin-left: 6px; width: 16px; }
.fy { margin-left: 8px; width: 14px; }
.fw { margin-left: 8px; width: 20px; }
.fh { margin-left: 17px; width: 15px; }

.small-lock { margin-left: 9px; flex: none; }

.spin {
    display: flex;
    height: 21px;
    flex: none;
    align-items: stretch;
}

.spin-val {
    width: 45px;
    border: 1px solid #a9a9a9;
    background: #fff;
    font-size: 12px;
    line-height: 19px;
    padding-left: 2px;
    white-space: nowrap;
    overflow: hidden;
    letter-spacing: -0.45px;
}

.spin-btns {
    width: 10px;
    display: flex;
    flex-direction: column;
    gap: 1px;
    background: #e4e4e4;
    border: 1px solid #c4c4c4;
    border-left: 0;
    align-items: center;
    justify-content: center;
    padding: 2px 0;
}

.spin-btns em {
    width: 0;
    height: 0;
    margin: 2px 0;
    border-left: 3.5px solid transparent;
    border-right: 3.5px solid transparent;
}

.spin-btns .up { border-bottom: 4px solid #333; }
.spin-btns .up.faint { border-bottom-color: #aaa; }
.spin-btns .down { border-top: 4px solid #111; }

.unit {
    display: flex;
    width: 42px;
    height: 20px;
    margin-left: 1px;
    flex: none;
    border: 1px solid #a9a9a9;
    background: #fff;
    font-size: 12px;
    align-items: center;
    padding-left: 3px;
}

.unit span { width: 23px; }

.combo-arrow {
    flex: 1;
    height: 100%;
    background: #ccc;
    display: flex;
    align-items: center;
    justify-content: center;
}

.sep-units { margin: 0 5px 0 6px; }

.toggle {
    height: 26px;
    border: 1px solid transparent;
}

.toggle svg { width: 14px; height: 12px; }

.toggle.on {
    background: #cce8ff;
    border-color: #99d1ff;
}

/* Middle part */
.main {
    height: 559px;
    flex: none;
    display: flex;
}

.toolbox {
    width: 36px;
    flex: none;
    padding: 3px 0 0 2px;
    display: flex;
    flex-direction: column;
}

.tool {
    width: 29px;
    height: 30px;
    flex: none;
    display: flex;
    align-items: center;
    justify-content: center;
    border: 1px solid transparent;
}

.tool svg { width: 24px; height: 24px; }

.tool.active {
    background: #cce8ff;
    border-color: #99d1ff;
}

.tool-more {
    flex: none;
    margin: 27px 0 0 11px;
}

.workspace {
    width: 1298px;
    flex: none;
    display: grid;
    grid-template-columns: 14px 1262px 22px;
    grid-template-rows: 17px 526px 16px;
    background: #f0f0f0;
}

.ruler-lock {
    display: flex;
    justify-content: center;
    padding-top: 3px;
}

/* ruler ticks every 6.6px, mid tick at 33, big one at 66 */
.ruler-h {
    display: flex;
    position: relative;
    overflow: hidden;
    padding-left: 30px;
    border-bottom: 1px solid #000;
    background-color: #f0f0f0;
    background-image:
        repeating-linear-gradient(to right, #000 0 1px, transparent 1px 66px),
        repeating-linear-gradient(to right, #000 0 1px, transparent 1px 33px),
        repeating-linear-gradient(to right, #000 0 1px, transparent 1px 6.6px);
    background-size: 100% 15px, 100% 7px, 100% 3px;
    background-position: 30px bottom, 30px bottom, 30px bottom;
    background-repeat: no-repeat;
}

.ruler-h span {
    width: 66px;
    flex: none;
    padding-left: 2px;
    font-size: 9px;
    line-height: 14px;
    color: #5c6470;
}

.ruler-mark-h {
    position: absolute;
    left: 941px;
    bottom: 0;
    width: 0;
    height: 0;
    border-left: 5px solid transparent;
    border-right: 5px solid transparent;
    border-bottom: 5px solid #000;
}

.corner-zoom {
    display: flex;
    padding: 1px 0 0 2px;
}

.ruler-v {
    grid-column: 1;
    display: flex;
    flex-direction: column;
    position: relative;
    overflow: hidden;
    width: 14px;
    border-right: 1px solid #000;
    margin-top: -3px;
    height: 529px;
    background-color: #f0f0f0;
    background-image:
        repeating-linear-gradient(to bottom, #000 0 1px, transparent 1px 66px),
        repeating-linear-gradient(to bottom, #000 0 1px, transparent 1px 33px),
        repeating-linear-gradient(to bottom, #000 0 1px, transparent 1px 6.6px);
    background-size: 13px 100%, 7px 100%, 3px 100%;
    background-position: right 0, right 0, right 0;
    background-repeat: no-repeat;
}

.ruler-v span {
    height: 66px;
    flex: none;
    width: 7px;
    margin-left: 1px;
    padding-top: 2px;
    font-size: 9px;
    line-height: 7.5px;
    word-break: break-all;
    color: #5c6470;
}

.ruler-mark-v {
    position: absolute;
    right: 0;
    top: 483px;
    width: 0;
    height: 0;
    border-top: 5px solid transparent;
    border-bottom: 5px solid transparent;
    border-right: 5px solid #000;
}

/* Drawing area - everything inside is placed on a free canvas */
.canvas {
    position: relative;
    overflow: hidden;
    background: #fff;
}

.page {
    position: absolute;
    left: 492px;
    top: 66px;
    width: 279px;
    height: 394px;
    background: #fff;
    border: 1px solid #444;
    box-shadow: 2px 2px 0 #666;
}

.selection {
    position: absolute;
    left: 805px;
    top: 276px;
    width: 279px;
    height: 400px;
    border: 1px dashed #555;
}

.logo-mark {
    position: absolute;
    left: 866px;
    top: 346px;
    width: 105px;
    text-align: center;
    font-family: "Liberation Sans", sans-serif;
    font-weight: 700;
    font-size: 53px;
    line-height: 60px;
    letter-spacing: -1px;
    -webkit-text-stroke: 1.5px #000;
    color: #000;
}

.logo-name {
    position: absolute;
    left: 914px;
    top: 422px;
    width: 100px;
    text-align: center;
    font-family: "Lato", sans-serif;
    font-weight: 900;
    font-size: 10.6px;
    line-height: 10.5px;
    color: #000;
    white-space: nowrap;
}

.handle { position: absolute; }
.h-nw { left: 792px; top: 263px; }
.h-n { left: 940px; top: 262px; }
.h-ne { left: 1083px; top: 263px; }
.h-w { left: 792px; top: 467px; }
.h-e { left: 1083px; top: 467px; }

.pointer { position: absolute; left: 943px; top: 472px; }
.move-cur { position: absolute; left: 958px; top: 489px; }

.scroll-v {
    position: relative;
    width: 16px;
    margin-left: 1px;
}

.arrow-up { position: absolute; left: 3px; top: 5px; }
.arrow-down { position: absolute; left: 3px; bottom: 6px; }

.thumb-v {
    position: absolute;
    left: 0;
    top: 163px;
    width: 15px;
    height: 198px;
    background: #cdcdcd;
}

.scroll-h {
    grid-column: 1 / span 2;
    display: flex;
    align-items: center;
    padding-left: 21px;
}

.thumb-h {
    width: 1228px;
    height: 14px;
    margin: 0 5px 0 5px;
    background: #cdcdcd;
}

.corner-color {
    display: flex;
    align-items: center;
    padding-left: 3px;
    margin-top: 1px;
}

/* Snap bar */
.snapbar {
    width: 32px;
    flex: none;
    border-left: 2px solid #aaa;
    background: #fff;
    padding-top: 9px;
    display: flex;
    flex-direction: column;
    align-items: center;
}

.snap {
    width: 18px;
    height: 18px;
    flex: none;
    margin-bottom: 8px;
}

.snap svg { width: 18px; height: 18px; display: block; overflow: hidden; }

.snap-sep {
    width: 16px;
    height: 1px;
    background: #aaa;
    flex: none;
    margin: 0 0 10px;
}

.s14 { margin-bottom: 9px; }
.s15 { margin-top: 1px; }

/* Palette */
.palette {
    height: 20px;
    flex: none;
    padding-top: 2px;
    display: flex;
    background: #fff;
}

.no-paint {
    width: 16px;
    height: 16px;
    flex: none;
    border: 1px solid #000;
    background: #fff;
}

.no-paint svg { display: block; }

#swatches {
    display: flex;
    flex: none;
    height: 16px;
    border-top: 1px solid #000;
}

#swatches span {
    width: 14px;
    height: 15px;
    flex: none;
}

.palette-menu {
    flex: 1;
    height: 16px;
    border-top: 1px solid #000;
    position: relative;
}

.palette-menu::after {
    content: "";
    position: absolute;
    right: 1px;
    top: 2px;
    width: 0;
    height: 0;
    border-top: 5px solid transparent;
    border-bottom: 5px solid transparent;
    border-right: 6px solid #000;
}

.palette-scroll {
    height: 15px;
    flex: none;
    background: #f0f0f0;
    display: flex;
    align-items: center;
    padding-left: 5px;
}

.ps-thumb {
    width: 295px;
    height: 14px;
    margin-left: 6px;
    background: #cdcdcd;
}

.ps-right { margin-left: auto; margin-right: 15px; }

/* Status bar */
.statusbar {
    height: 29px;
    flex: none;
    display: flex;
    align-items: center;
    background: #f0f0f0;
    padding-left: 2px;
    font-size: 11px;
}

.fs-labels, .fs-values {
    display: flex;
    flex-direction: column;
    line-height: 14px;
    flex: none;
}

.fs-labels { width: 65px; }
.fs-values { width: 59px; font-weight: 700; }

.opacity-label { width: 14px; font-size: 12px; color: #333; flex: none; }

.opacity-spin .spin-val {
    width: 38px;
    padding-left: 3px;
}

.opacity-spin { height: 20px; }

.opacity-spin .spin-btns { background: #f0f0f0; border-color: #ddd; }

.status-sep {
    width: 1px;
    height: 28px;
    margin: 0 0 0 3px;
    background: #c8c8c8;
    flex: none;
}

.eye { margin-left: 4px; flex: none; }
.status-lock { margin-left: 9px; flex: none; }

.layer-combo {
    width: 69px;
    height: 27px;
    margin-left: 4px;
    display: flex;
    flex: none;
    background: #fff;
    border: 1px solid #c8c8c8;
    align-items: center;
}

.layer-name {
    width: 52px;
    padding-left: 3px;
    font-weight: 700;
    font-size: 10px;
    white-space: nowrap;
}

.message {
    margin-left: 2px;
    font-size: 12px;
    letter-spacing: -0.33px;
    white-space: nowrap;
}

.message strong { font-weight: 700; }

.coords {
    margin-left: auto;
    display: flex;
    align-items: center;
    height: 100%;
    border-left: 1px solid #b5b5b5;
    padding-left: 3px;
    width: 141px;
    flex: none;
}

.coord-grid {
    display: grid;
    grid-template-columns: 18px 51px;
    font-family: "DejaVu Sans Mono", "Liberation Mono", monospace;
    font-size: 10px;
    line-height: 14px;
    padding-top: 2px;
    flex: none;
}

.zoom-label { margin-left: 1px; width: 11px; font-size: 11px; flex: none; }

.zoom-spin .spin-val {
    width: 43px;
    text-align: center;
    padding-left: 0;
}

.zoom-spin { height: 21px; }

.zoom-spin .spin-btns { width: 12px; }

.bottom-strip {
    height: 2px;
    flex: none;
    background: #dcdcdc;
}

.bottom-strip span {
    display: block;
    width: 342px;
    height: 2px;
    margin-left: 49px;
    background: #fff;
}
```

FILE: app.js
```js
// Inkscape default palette, in the order it shows on the bar
const colors = [
    "#000000", "#1a1a1a", "#333333", "#4d4d4d", "#666666", "#808080", "#999999", "#b3b3b3", "#cccccc", "#e6e6e6", "#ececec", "#f2f2f2", "#f9f9f9", "#ffffff",
    "#800000", "#ff0000", "#808000", "#ffff00", "#008000", "#00ff00", "#008080", "#00ffff", "#000080", "#0000ff", "#800080", "#ff00ff",
    "#2b0000", "#550000", "#800000", "#aa0000", "#d40000", "#ff0000", "#ff2a2a", "#ff5555", "#ff8080", "#ffaaaa", "#ffd5d5",
    "#280b0b", "#501616", "#782121", "#a02c2c", "#c83737", "#d35f5f", "#de8787", "#e9afaf", "#f4d7d7",
    "#241c1c", "#483737", "#6c5353", "#916f6f", "#ac9393", "#c8b7b7", "#e3dbdb",
    "#2b1100", "#552200", "#803300", "#aa4400", "#d45500", "#ff6600", "#ff7f2a", "#ff9955", "#ffb380", "#ffccaa", "#ffe6d5",
    "#28170b", "#502d16", "#784421", "#a05a2c", "#c87137", "#d38d5f", "#deaa87", "#e9c6af", "#f4e3d7",
    "#241f1c", "#483e37", "#6c5d53", "#917c6f", "#ac9d93", "#c8beb7", "#e3dedb",
    "#2b2200", "#554400", "#806600", "#aa8800", "#d4aa00", "#ffcc00", "#ffd42a", "#ffdd55", "#ffe680", "#ffeeaa", "#fff6d5",
    "#28220b", "#504416", "#786721", "#a08c2c", "#c8ab37"
];

const bar = document.getElementById("swatches");
colors.forEach(c => {
    let s = document.createElement("span");
    s.style.background = c;
    bar.appendChild(s);
});
```
